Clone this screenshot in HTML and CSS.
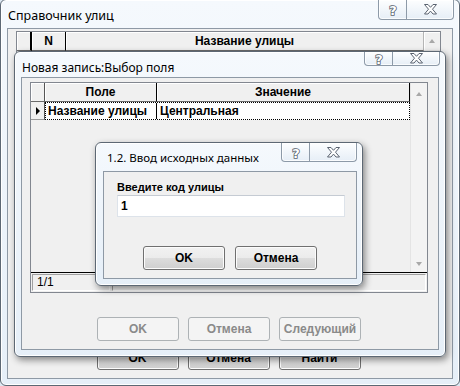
FILE: index.html
```html
<!DOCTYPE html>
<html lang="ru">
	<head>
		<meta charset="UTF-8">
		<title>Справочник улиц</title>
		<link rel="stylesheet" href="styles.css">
	</head>
	<body>
		<div class="desk">
			<!--главное окно-->
			<div class="win main">
				<div class="caption">
					<span class="cap-title">Справочник улиц</span>
					<div class="cap-btns">
						<span class="cap-btn help"><svg width="12" height="15" viewBox="0 0 12 15"><text x="6" y="13" class="q">?</text></svg></span>
						<span class="cap-btn close"><svg width="15" height="11" viewBox="0 0 15 11"><polygon class="x" points="1.5,0.5 5,0.5 7.5,3.3 10,0.5 13.5,0.5 9.5,5.2 13.5,10 10,10 7.5,7.1 5,10 1.5,10 5.5,5.2"/></svg></span>
					</div>
				</div>
				<div class="client main-client">
					<div class="grid big-grid">
						<div class="hdr">
							<div class="hcell ind"></div>
							<div class="hcell num">N</div>
							<div class="hcell name">Название улицы</div>
							<div class="hcell sb"><span class="arr up"></span></div>
						</div>
					</div>
					<div class="btn-row">
						<button class="btn">OK</button>
						<button class="btn">Отмена</button>
						<button class="btn">Найти</button>
					</div>
				</div>
			</div>

			<!--выбор поля-->
			<div class="win pick">
				<div class="caption">
					<span class="cap-title">Новая запись:Выбор поля</span>
					<div class="cap-btns">
						<span class="cap-btn help"><svg width="12" height="14" viewBox="0 0 12 14"><text x="6" y="12" class="q">?</text></svg></span>
						<span class="cap-btn close"><svg width="15" height="11" viewBox="0 0 15 11"><polygon class="x" points="1.5,0.5 5,0.5 7.5,3.3 10,0.5 13.5,0.5 9.5,5.2 13.5,10 10,10 7.5,7.1 5,10 1.5,10 5.5,5.2"/></svg></span>
					</div>
				</div>
				<div class="client pick-client">
					<div class="grid small-grid">
						<div class="gbody">
							<div class="gtable">
								<div class="hdr">
									<div class="hcell ind"></div>
									<div class="hcell pole">Поле</div>
									<div class="hcell val">Значение</div>
								</div>
								<div class="grow">
									<div class="rcell ind"><span class="tri"></span></div>
									<div class="focus">
										<div class="rcell pole">Название улицы</div>
										<div class="rcell val">Центральная</div>
									</div>
								</div>
							</div>
							<div class="vscroll">
								<span class="arr up"></span>
								<span class="arr down"></span>
							</div>
						</div>
						<div class="status">
							<span class="panel cnt">1/1</span>
							<span class="panel rest"></span>
						</div>
					</div>
					<div class="btn-row">
						<button class="btn off">OK</button>
						<button class="btn off">Отмена</button>
						<button class="btn off">Следующий</button>
					</div>
				</div>
			</div>

			<!--ввод данных-->
			<div class="win dlg">
				<div class="caption">
					<span class="cap-title">1.2. Ввод исходных данных</span>
					<div class="cap-btns">
						<span class="cap-btn help"><svg width="12" height="15" viewBox="0 0 12 15"><text x="6" y="13" class="q">?</text></svg></span>
						<span class="cap-btn close"><svg width="15" height="11" viewBox="0 0 15 11"><polygon class="x" points="1.5,0.5 5,0.5 7.5,3.3 10,0.5 13.5,0.5 9.5,5.2 13.5,10 10,10 7.5,7.1 5,10 1.5,10 5.5,5.2"/></svg></span>
					</div>
				</div>
				<div class="client dlg-client">
					<label class="lbl" for="code">Введите код улицы</label>
					<input class="field" id="code" type="text" value="1">
					<div class="btn-row">
						<button class="btn">OK</button>
						<button class="btn">Отмена</button>
					</div>
				</div>
			</div>
		</div>
	</body>
</html>
```

FILE: styles.css
```css
body{
	margin:0;
	background:#dde8f2;
	font-family:"Liberation Sans",Arial,sans-serif;
}

.desk{
	position:relative;
	width:460px;
	height:386px;
	overflow:hidden;
}

/*окна*/
.win{
	position:absolute;
	box-sizing:border-box;
	display:flex;
	flex-direction:column;
	border:1px solid #5d6874;
	border-radius:6px;
	background:linear-gradient(#f5f9fd,#e6eff8);
	box-shadow:inset 0 0 0 1px #fff;
}

.main{
	left:0;
	top:-1px;
	width:460px;
	height:387px;
}

.pick{
	left:14px;
	top:51px;
	width:432px;
	height:306px;
	box-shadow:inset 0 0 0 1px #fff,2px 3px 7px rgba(0,0,0,0.45);
}

.dlg{
	left:95px;
	top:142px;
	width:268px;
	height:144px;
	box-shadow:inset 0 0 0 1px #fff,2px 3px 7px rgba(0,0,0,0.45);
}

/*заголовок*/
.caption{
	display:flex;
	align-items:flex-start;
	flex:none;
	height:28px;
}

.pick .caption{
	height:25px;
}

.cap-title{
	margin-right:auto;
	padding:7px 0 0 7px;
	font:12px/17px "Noto Sans","Liberation Sans",sans-serif;
	color:#000;
	white-space:nowrap;
}

.main .cap-title{
	font-size:12.5px;
}

.dlg .cap-title{
	padding:6px 0 0 11px;
	font-size:11.5px;
}

.cap-btns{
	display:flex;
	margin-right:5px;
	border:1px solid #8d9aa8;
	border-top:none;
	border-radius:0 0 4px 4px;
	background:linear-gradient(#fdfeff,#e6eef6);
	box-shadow:inset 0 0 0 1px rgba(255,255,255,0.8);
}

.cap-btn{
	display:flex;
	align-items:center;
	justify-content:center;
	height:19px;
}

.pick .cap-btn{
	height:13px;
}

.dlg .cap-btn{
	height:18px;
}

.cap-btn.help{
	width:27px;
	border-right:1px solid #8d9aa8;
}

.cap-btn.close{
	width:46px;
}

.q{
	font:bold 13px "DejaVu Sans",sans-serif;
	text-anchor:middle;
	fill:#fff;
	stroke:#5a6370;
	stroke-width:1.6;
	paint-order:stroke;
}

.x{
	fill:#fff;
	stroke:#5a6370;
	stroke-width:1;
	stroke-linejoin:round;
}

/*клиентская область*/
.client{
	flex:1;
	display:flex;
	flex-direction:column;
	margin:0 6px 6px;
	border:1px solid #8e99a5;
	background:#f0f0f0;
	min-height:0;
}

.main-client{
	padding:2px 11px 8px 8px;
}

.pick-client{
	padding:4px 10px 7px 8px;
}

.dlg-client{
	margin:0 5px 6px 7px;
	padding:8px 11px 8px 13px;
}

/*кнопки*/
.btn-row{
	display:flex;
	justify-content:center;
	gap:9px;
	flex:none;
}

.main-client .btn-row{
	margin-top:8px;
}

.pick-client .btn-row{
	margin-top:24px;
}

.dlg-client .btn-row{
	margin-top:29px;
	gap:10px;
	padding-right:2px;
}

.btn{
	box-sizing:border-box;
	width:82px;
	height:24px;
	padding:0;
	border:1px solid #707070;
	border-radius:3px;
	background:linear-gradient(#f2f2f2 0,#ebebeb 50%,#dddddd 50%,#cfcfcf 100%);
	box-shadow:inset 0 0 0 1px #fcfcfc;
	font:bold 12px "Liberation Sans",Arial,sans-serif;
	color:#000;
}

.btn.off{
	border-color:#adb2b5;
	background:#f4f4f4;
	box-shadow:none;
	color:#8a8a8a;
}

/*таблицы*/
.grid{
	box-sizing:border-box;
	border:1px solid #828790;
	background:#f0f0f0;
	display:flex;
	flex-direction:column;
}

.big-grid{
	flex:1;
}

.small-grid{
	height:211px;
	flex:none;
}

.hdr{
	display:flex;
	height:19px;
	flex:none;
}

.hcell{
	box-sizing:border-box;
	height:19px;
	border-right:1px solid #000;
	border-bottom:1px solid #6b6b6b;
	box-shadow:inset 1px 1px 0 #fff;
	background:#f0f0f0;
	font:bold 12px/18px "Liberation Sans",Arial,sans-serif;
	text-align:center;
	white-space:nowrap;
}

.big-grid .ind{
	width:15px;
	border-right:2px solid #000;
}

.big-grid .num{
	width:34px;
}

.big-grid .name{
	flex:1;
	border-right-color:#b5b5b5;
}

.hcell.sb{
	width:16px;
	border-right:none;
	border-bottom-color:#e0e0e0;
	display:flex;
	justify-content:center;
	align-items:center;
}

.gbody{
	display:flex;
	height:189px;
	flex:none;
	border-bottom:1px solid #000;
}

.gtable{
	flex:1;
}

.gtable .ind{
	width:14px;
	border-right-color:#555;
}

.gtable .pole{
	width:112px;
}

.gtable .val{
	flex:1;
}

.grow{
	display:flex;
	height:18px;
}

.rcell{
	box-sizing:border-box;
	font:bold 12px/16px "Liberation Sans",Arial,sans-serif;
	color:#000;
	white-space:nowrap;
}

.rcell.ind{
	width:14px;
	border-right:1px solid #555;
	border-bottom:1px solid #9a9a9a;
	display:flex;
	align-items:center;
	padding-left:5px;
}

.tri{
	width:0;
	height:0;
	border-top:4px solid transparent;
	border-bottom:4px solid transparent;
	border-left:4px solid #000;
}

.focus{
	flex:1;
	display:flex;
	border:1px dotted #000;
	background:#fff;
}

.focus .pole{
	width:111px;
	padding-left:2px;
	border-right:1px solid #000;
}

.focus .val{
	padding-left:3px;
}

.vscroll{
	width:17px;
	display:flex;
	flex-direction:column;
	justify-content:space-between;
	align-items:center;
	padding:9px 0 6px;
	box-sizing:border-box;
	background:#f3f3f3;
	border-left:1px solid #e4e4e4;
}

.arr{
	width:0;
	height:0;
	border-left:3px solid transparent;
	border-right:3px solid transparent;
}

.arr.up{
	border-bottom:4px solid #a8a8a8;
}

.arr.down{
	border-top:4px solid #a8a8a8;
}

/*строка состояния*/
.status{
	display:flex;
	gap:2px;
	flex:1;
	padding:1px;
}

.panel{
	box-sizing:border-box;
	border:1px solid;
	border-color:#a0a0a0 #fff #fff #a0a0a0;
	font:12px/15px "Liberation Sans",Arial,sans-serif;
	color:#000;
}

.panel.cnt{
	width:78px;
	padding-left:4px;
}

.panel.rest{
	flex:1;
}

/*диалог ввода*/
.lbl{
	font:bold 11px/14px "Liberation Sans",Arial,sans-serif;
	color:#000;
}

.field{
	box-sizing:border-box;
	width:228px;
	height:22px;
	margin-top:1px;
	padding:0 3px;
	border:1px solid #dde3ea;
	border-top-color:#c5cbd3;
	background:#fff;
	font:bold 12px "Liberation Sans",Arial,sans-serif;
	color:#000;
	outline:none;
}
```
